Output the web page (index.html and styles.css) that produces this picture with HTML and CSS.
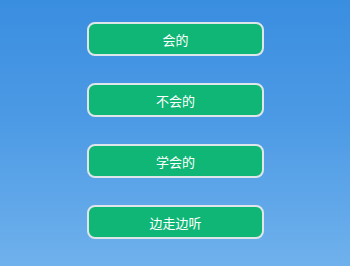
FILE: index.html
```html
<!DOCTYPE html>
<html>
<head>
<meta charset="utf-8">
<link rel="stylesheet" href="styles.css">
</head>
<body>
<div class="menu">
  <button class="btn">会的</button>
  <button class="btn">不会的</button>
  <button class="btn">学会的</button>
  <button class="btn">边走边听</button>
</div>
</body>
</html>
```
FILE: styles.css
```css
html, body {
  margin: 0;
  height: 100%;
}
body {
  width: 350px;
  height: 266px;
  overflow: hidden;
  background: linear-gradient(180deg, #3a8ee0 0%, #4c9ae5 45%, #6fb1ec 100%);
  font-family: "Noto Sans CJK SC", "Noto Sans", sans-serif;
}
.menu {
  display: flex;
  flex-direction: column;
  align-items: center;
  padding-top: 22px;
  padding-left: 1px;
  gap: 27px;
}
.btn {
  box-sizing: border-box;
  width: 177px;
  height: 34px;
  border: 2px solid #dfe6ea;
  border-radius: 8px;
  background: #10b675;
  color: #ffffff;
  font-family: inherit;
  font-size: 13px;
  padding: 0;
  display: flex;
  align-items: center;
  justify-content: center;
}
```
